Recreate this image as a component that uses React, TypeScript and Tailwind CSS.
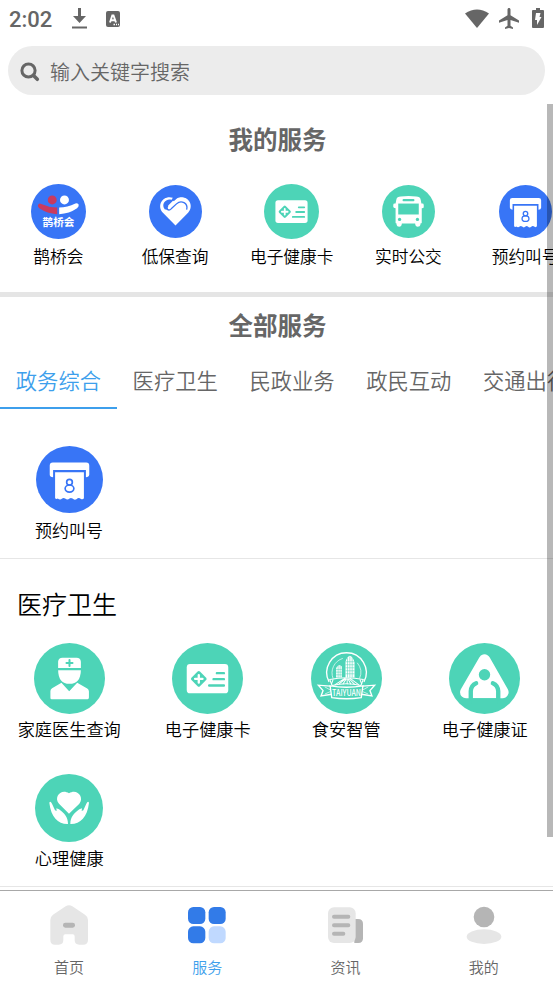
import type { ReactNode } from 'react';

function Disc({ r, color, size, children }: { r: number; color: string; size: string; children: ReactNode }) {
  return (
    <svg className={`${size} shrink-0`} viewBox={`${-r} ${-r} ${r * 2} ${r * 2}`}>
      <circle r={r} fill={color} />
      {children}
    </svg>
  );
}

const BLUE = '#3875f6';
const GREEN = '#4dd4b7';

function MagpieIcon({ size }: { size: string }) {
  return (
    <Disc r={83} color={BLUE} size={size}>
      <circle cx="-19" cy="-35" r="13.5" fill="#c93a5f" />
      <path d="M-62 -19 Q-60 -26 -52 -23 Q-28 -12 -4 -12 V8 Q-34 6 -57 -9 Q-63 -13 -62 -19Z" fill="#c93a5f" />
      <circle cx="18" cy="-35" r="13.5" fill="#fff" />
      <path d="M61 -20 Q59 -27 51 -24 Q27 -12 2 -12 V8 Q33 6 56 -10 Q62 -14 61 -20Z" fill="#fff" />
      <text y="45" textAnchor="middle" fontSize="32" fontWeight="700" fill="#fff">鹊桥会</text>
    </Disc>
  );
}

function HeartIcon({ size }: { size: string }) {
  return (
    <Disc r={80} color={BLUE} size={size}>
      <path d="M0 42 L-38 4 C-56 -16 -42 -43 -18 -43 Q-8 -43 0 -36 Q8 -43 18 -43 C42 -43 56 -16 38 4Z" fill="#fff" />
      <path d="M-32 -6 C-44 -20 -32 -37 -16 -36 L-6 -34 L-22 -18 L-22 -7Z" fill={BLUE} />
      <path d="M-6 -45 L-12 -35 L-4 -31 L2 -37Z" fill={BLUE} />
      <path d="M-28 -9 Q-20 -1 -13 -8 L3 -23 C18 -37 38 -24 34 -7" fill="none" stroke={BLUE} strokeWidth="4" strokeLinecap="round" />
      <path d="M-20 -11 L0 -31 Q6 -38 16 -39" fill="none" stroke="#fff" strokeWidth="7" strokeLinecap="round" />
    </Disc>
  );
}

function CardIcon({ size }: { size: string }) {
  return (
    <Disc r={106} color={GREEN} size={size}>
      <rect x="-62" y="-43" width="124" height="87" rx="10" fill="#fff" />
      <rect x="-18" y="-18" width="36" height="36" rx="5" transform="translate(-26 1) rotate(45)" fill={GREEN} />
      <path d="M-37 1 H-15 M-26 -10 V12" stroke="#fff" strokeWidth="7" strokeLinecap="round" />
      <path d="M28 -16 H49 M18 2 H49 M5 21 H49" stroke={GREEN} strokeWidth="7" strokeLinecap="round" />
    </Disc>
  );
}

function BusIcon({ size }: { size: string }) {
  return (
    <Disc r={80} color={GREEN} size={size}>
      <path d="M-37 -35 Q-35 -45 -23 -45 Q0 -48 23 -45 Q35 -45 37 -35 L39 -24 H42 Q46 -24 46 -20 V-13 Q46 -10 40 -10 V34 Q40 36 36 36 V40 Q35 46 28 46 Q21 46 20 36 H-20 Q-21 46 -28 46 Q-35 46 -36 40 V36 Q-39 36 -39 34 V-10 Q-46 -10 -46 -14 V-20 Q-46 -24 -42 -24 H-39Z" fill="#fff" />
      <rect x="-18" y="-38" width="36" height="7" rx="3" fill={GREEN} />
      <path d="M-31 -24 H31 V9 H-31Z" fill={GREEN} />
      <circle cx="-27" cy="24" r="5" fill={GREEN} />
      <circle cx="27" cy="24" r="5" fill={GREEN} />
    </Disc>
  );
}

function TicketIcon({ size }: { size: string }) {
  return (
    <Disc r={100} color={BLUE} size={size}>
      <path d="M-59 -42 Q-59 -51 -50 -51 H50 Q59 -51 59 -42 V-14 Q58 -7 49 -7 V-28 H-49 V-7 Q-59 -7 -59 -15Z" fill="#fff" />
      <path d="M-43 -22 H43 V56 Q40 61 34 58 L31 56 Q25 53 22 58 Q15 63 9 57 Q4 53 0 57 Q-6 63 -13 57 Q-18 53 -22 57 Q-28 62 -35 57 Q-39 60 -43 56Z" fill="#fff" />
      <circle cy="8" r="8.5" fill="none" stroke={BLUE} strokeWidth="5" />
      <ellipse cy="27" rx="13" ry="10.5" fill="none" stroke={BLUE} strokeWidth="5" />
    </Disc>
  );
}

function DoctorIcon({ size }: { size: string }) {
  return (
    <Disc r={106} color={GREEN} size={size}>
      <path d="M-34 -31 V-50 Q-33 -62 -21 -62 H21 Q33 -62 34 -50 V-31Z" fill="#fff" />
      <path d="M-9 -46 H9 M0 -55 V-37" stroke={GREEN} strokeWidth="6" strokeLinecap="round" />
      <path d="M-34 -25 H34 Q33 16 0 16 Q-33 16 -34 -25Z" fill="#fff" />
      <path d="M-57 37 Q-57 32 -52 29 L-24 13 L-1 38 L23 13 L53 30 Q58 33 58 39 V57 Q58 62 54 62 H-53 Q-57 62 -57 58Z" fill="#fff" />
      <path d="M-12 21 Q0 27 12 21 L0 36Z" fill={GREEN} />
    </Disc>
  );
}

function TaiyuanIcon({ size }: { size: string }) {
  return (
    <Disc r={106} color={GREEN} size={size}>
      <g fill="none" stroke="#fff">
        <path d="M-52 10 A59 59 0 1 1 52 10" strokeWidth="4" />
        <path d="M-40 0 A45 45 0 0 1 -11 -60 M32 -47 A45 45 0 0 1 39 0" strokeWidth="2" />
        <path d="M-50 3 Q0 -8 50 3 L43 21 Q0 11 -43 21Z" strokeWidth="3" />
        <path d="M-4 -1 L-35 19 M-2 0 L-23 17 M0 0 L-11 17 M2 0 V17 M4 0 L13 17 M7 0 L25 18 M10 -1 L37 19 M-40 3 L-45 17 M40 3 L46 17" strokeWidth="3" />
        <path d="M-48 23 L-84 20 L-70 36 L-76 52 L-44 47 M48 23 L84 20 L70 36 L76 52 L44 47" strokeWidth="4" />
        <path d="M-65 25 L-49 34 M65 25 L49 34 M-64 46 L-48 39 M64 46 L48 39" strokeWidth="2" />
      </g>
      <path d="M-3 -3 V-50 Q1 -65 10 -68 Q20 -65 24 -48 V-3Z" fill="#fff" />
      <path d="M-31 -3 V-31 Q-22 -47 -14 -36 V-3Z" fill="#fff" />
      <path d="M3 -62 V-3 M10 -66 V-3 M17 -63 V-3 M-3 -50 H24 M-3 -41 H24 M-3 -32 H24 M-3 -23 H24 M-3 -14 H24 M-25 -39 V-3 M-19 -40 V-3 M-31 -27 H-14 M-31 -19 H-14 M-31 -11 H-14" stroke={GREEN} strokeWidth="1.6" />
      <path d="M-49 22 Q0 30 49 22 L44 57 Q0 64 -44 57Z" fill={GREEN} stroke="#fff" strokeWidth="4" />
      <text y="52" textAnchor="middle" fontSize="26" fontWeight="500" fill="#fff" textLength="86" lengthAdjust="spacingAndGlyphs">TAIYUAN</text>
    </Disc>
  );
}

function HealthProofIcon({ size }: { size: string }) {
  return (
    <Disc r={106} color={GREEN} size={size}>
      <path d="M-55 41 L0 -54 L54 41Z" fill="#fff" stroke="#fff" strokeWidth="36" strokeLinejoin="round" />
      <circle cy="-11" r="17" fill={GREEN} />
      <path d="M-41 60 V38 Q-40 20 -25 14 M41 60 V38 Q40 20 25 14" fill="none" stroke={GREEN} strokeWidth="13" strokeLinecap="round" />
      <path d="M-40 59 H40 V76 H-40Z" fill={GREEN} />
    </Disc>
  );
}

function CareIcon({ size }: { size: string }) {
  return (
    <Disc r={102} color={GREEN} size={size}>
      <path d="M0 17 L-30 -13 C-47 -32 -24 -60 0 -44 C24 -60 47 -32 31 -13Z" fill="#fff" />
      <path d="M-3 48 C-32 49 -54 28 -59 -16 Q-56 -22 -51 -13 L-42 7 L-37 9 L-38 1 L-30 4 C-14 16 -3 27 -3 48Z" fill="#fff" />
      <path d="M4 48 C33 49 55 28 60 -16 Q57 -22 52 -13 L43 7 L38 9 L39 1 L31 4 C15 16 4 27 4 48Z" fill="#fff" />
    </Disc>
  );
}

const myServices = [
  { label: '鹊桥会', icon: <MagpieIcon size="size-[55px]" /> },
  { label: '低保查询', icon: <HeartIcon size="size-[53px]" /> },
  { label: '电子健康卡', icon: <CardIcon size="size-[55px]" /> },
  { label: '实时公交', icon: <BusIcon size="size-[53px]" /> },
  { label: '预约叫号', icon: <TicketIcon size="size-[53px]" /> },
];

const tabs = ['政务综合', '医疗卫生', '民政业务', '政民互动', '交通出行'];

const medicalServices = [
  { label: '家庭医生查询', icon: <DoctorIcon size="size-[71px]" /> },
  { label: '电子健康卡', icon: <CardIcon size="size-[71px]" /> },
  { label: '食安智管', icon: <TaiyuanIcon size="size-[71px]" /> },
  { label: '电子健康证', icon: <HealthProofIcon size="size-[71px]" /> },
  { label: '心理健康', icon: <CareIcon size="size-[68px]" /> },
];

const navItems = [
  {
    label: '首页',
    icon: (
      <>
        <path d="M-56 -15 Q-56 -25 -48 -31 L-10 -56 Q0 -63 10 -56 L48 -31 Q57 -25 57 -15 V44 Q57 59 42 59 H31 Q17 59 17 45 V34 Q17 28 11 28 H-11 Q-17 28 -17 34 V45 Q-17 59 -31 59 H-42 Q-56 59 -56 44Z" fill="#e6e6e6" />
        <rect x="-18" y="-7" width="36" height="15" rx="7" fill="#b5b5b5" />
      </>
    ),
  },
  {
    label: '服务',
    active: true,
    icon: (
      <>
        <rect x="-57" y="-54" width="52" height="51" rx="16" fill="#327be8" />
        <rect x="5" y="-54" width="51" height="51" rx="16" fill="#327be8" />
        <rect x="-57" y="4" width="52" height="51" rx="16" fill="#327be8" />
        <rect x="5" y="4" width="51" height="51" rx="16" fill="#c0d9ff" />
      </>
    ),
  },
  {
    label: '资讯',
    icon: (
      <>
        <path d="M25 -18 H36 Q51 -18 51 -3 V40 Q51 54 37 54 H25Z" fill="#b5b5b5" />
        <rect x="-54" y="-53" width="83" height="107" rx="18" fill="#e6e6e6" />
        <path d="M-36 -25 H7 M-36 1 H7 M-36 26 H-8" stroke="#b5b5b5" strokeWidth="12" strokeLinecap="round" />
      </>
    ),
  },
  {
    label: '我的',
    icon: (
      <>
        <circle cy="-24" r="31" fill="#b5b5b5" />
        <ellipse cy="35" rx="52" ry="22" fill="#e6e6e6" />
      </>
    ),
  },
];

function StatusBar() {
  return (
    <div className="h-[46px] flex items-start justify-between pl-[9px] pr-[9px] text-[#666]">
      <div className="flex items-center h-[38px]">
        <span className="w-[62px] font-['Roboto',sans-serif] text-[22px] font-medium">2:02</span>
        <svg className="w-[17px] h-[22px]" viewBox="0 0 17 22" fill="currentColor">
          <path d="M7 0 H10 V8 H15 L8.5 15 L2 8 H7Z M1 18.500 H16 V20.500 H1Z" />
        </svg>
        <svg className="ml-[18px] w-[14px] h-4" viewBox="0 0 14 16">
          <rect width="14" height="16" rx="2" fill="currentColor" />
          <path d="M4 11.500 L6.300 4.500 H7.500 L10 11.500 M5 9.300 H9" fill="none" stroke="#fff" strokeWidth="1.900" />
          <path d="M7.500 13.500 H9 M10 13.500 H11 M12 13.500 H13" stroke="#fff" strokeWidth="1.3" />
        </svg>
      </div>
      <div className="flex items-center h-[36px]">
        <svg className="w-6 h-[19px]" viewBox="0 0 24 19" fill="currentColor">
          <path d="M0 4.5 Q12 -3.5 24 4.5 L12 19Z" />
        </svg>
        <svg className="ml-[10px] w-5 h-[21px]" viewBox="2 2 20 20" preserveAspectRatio="none" fill="currentColor">
          <path d="M22 16v-2l-8.5-5V3.5C13.500 2.670 12.830 2 12 2s-1.500.67-1.500 1.500V9L2 14v2l8.500-2.500V19L8 20.500V22l4-1 4 1v-1.500L13.500 19v-5.500L22 16z" />
        </svg>
        <svg className="ml-[13px] w-3 h-5" viewBox="0 0 12 20">
          <path d="M4 0 H8 V2 H11 Q12 2 12 3 V19 Q12 20 11 20 H1 Q0 20 0 19 V3 Q0 2 1 2 H4Z" fill="currentColor" />
          <path d="M4 5 H8.500 L7.500 9 H9.500 L5 17 V12 H3Z" fill="#fff" />
        </svg>
      </div>
    </div>
  );
}

export default function App() {
  return (
    <div className="relative flex h-[983px] w-[553px] flex-col overflow-hidden bg-white font-['Noto_Sans_CJK_SC',sans-serif] font-[350] text-black">
      <StatusBar />
      <div className="mx-2 h-[49px] shrink-0 rounded-full bg-[#ececec] flex items-center pl-3 pt-[3px] text-[#666]">
        <svg className="size-5" viewBox="0 0 20 20" fill="none" stroke="currentColor" strokeLinecap="round">
          <circle cx="8.500" cy="8.500" r="6.600" strokeWidth="3" />
          <path d="M13.500 13.500 L17.300 17.300" strokeWidth="3.600" />
        </svg>
        <span className="ml-[10px] text-[20px] leading-6">输入关键字搜索</span>
      </div>

      <main className="flex-1 overflow-hidden">
        <section className="h-[202px] border-b-[5px] border-[#e5e5e5]">
          <h2 className="pt-[26px] pl-[2px] text-center text-[24.500px] leading-9 font-bold text-[#666]">我的服务</h2>
          <div className="mt-[26px] flex w-[584px]">
            {myServices.map((item) => (
              <div key={item.label} className="flex w-[116.700px] shrink-0 flex-col items-center">
                <div className="flex h-[56px] items-center">{item.icon}</div>
                <span className="mt-[5px] text-[16.700px] leading-6 whitespace-nowrap">{item.label}</span>
              </div>
            ))}
          </div>
        </section>

        <section className="h-[262px] border-b border-[#e6e6e6]">
          <h2 className="pt-[10px] pl-[2px] text-center text-[24.500px] leading-9 font-bold text-[#666]">全部服务</h2>
          <div className="mt-[12px] flex h-[54px] w-[584px]">
            {tabs.map((tab, index) => (
              <button
                key={tab}
                className={`w-[116.800px] shrink-0 pb-[2px] text-[21.300px] leading-8 whitespace-nowrap ${
                  index === 0 ? 'border-b-2 border-[#3d9fec] text-[#3d9fec]' : 'border-b-2 border-transparent text-[#666]'
                }`}
              >
                {tab}
              </button>
            ))}
          </div>
          <div className="mt-[37px] flex w-[138px] flex-col items-center">
            <TicketIcon size="size-[67px]" />
            <span className="mt-[5px] text-[17px] leading-6">预约叫号</span>
          </div>
        </section>

        <section className="h-[328px] border-b border-[#e6e6e6]">
          <h3 className="pt-[26px] pl-[17px] text-[25px] leading-9">医疗卫生</h3>
          <div className="mt-[22px] grid w-[554px] grid-cols-4">
            {medicalServices.map((item) => (
              <div key={item.label} className="flex h-[129px] flex-col items-center">
                <div className="flex h-[71px] items-center">{item.icon}</div>
                <span className="mt-[3px] text-[17.200px] leading-6 whitespace-nowrap">{item.label}</span>
              </div>
            ))}
          </div>
        </section>
      </main>

      <nav className="grid h-[93px] shrink-0 grid-cols-4 border-t border-[#a8a8a8]">
        {navItems.map((item) => (
          <div key={item.label} className="flex flex-col items-center pt-[14px]">
            <svg className="size-10" viewBox="-60 -60 120 120">{item.icon}</svg>
            <span className={`mt-[10px] text-[15px] leading-6 ${item.active ? 'text-[#3d9fec]' : 'text-[#666]'}`}>{item.label}</span>
          </div>
        ))}
      </nav>

      {/* scroll thumb */}
      <div className="absolute top-[104px] right-0 h-[733px] w-[6px] bg-black/28" />
    </div>
  );
}
